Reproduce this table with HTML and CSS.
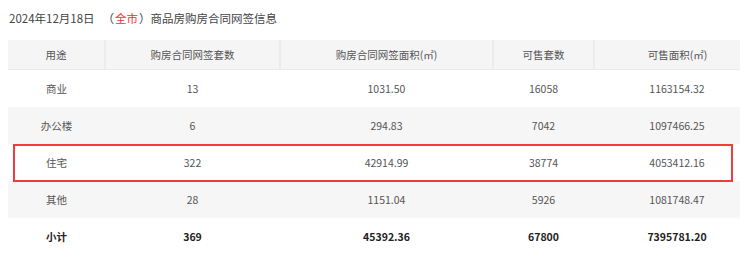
FILE: index.html
```html
<!DOCTYPE html>
<html lang="zh-CN">
<head>
<meta charset="utf-8">
<title>商品房购房合同网签信息</title>
<link rel="stylesheet" href="styles.css">
</head>
<body>
<div class="page">
  <div class="title">2024年12月18日<span class="paren">（<span class="city">全市</span>）</span>商品房购房合同网签信息</div>
  <div class="table-wrap">
    <table class="data">
      <colgroup>
        <col class="c1"><col class="c2"><col class="c3"><col class="c4"><col class="c5">
      </colgroup>
      <thead>
        <tr><th>用途</th><th>购房合同网签套数</th><th>购房合同网签面积(㎡)</th><th>可售套数</th><th>可售面积(㎡)</th></tr>
      </thead>
      <tbody>
        <tr><td>商业</td><td>13</td><td>1031.50</td><td>16058</td><td>1163154.32</td></tr>
        <tr class="alt"><td>办公楼</td><td>6</td><td>294.83</td><td>7042</td><td>1097466.25</td></tr>
        <tr><td>住宅</td><td>322</td><td>42914.99</td><td>38774</td><td>4053412.16</td></tr>
        <tr class="alt"><td>其他</td><td>28</td><td>1151.04</td><td>5926</td><td>1081748.47</td></tr>
        <tr class="total"><td>小计</td><td>369</td><td>45392.36</td><td>67800</td><td>7395781.20</td></tr>
      </tbody>
    </table>
    <div class="highlight"></div>
  </div>
</div>
</body>
</html>
```
FILE: styles.css
```css
html, body {
  margin: 0;
  padding: 0;
  background: #fff;
  overflow: hidden;
}
.page {
  padding: 8px 0 0 8px;
  font-family: "Noto Sans CJK SC", "Noto Sans", sans-serif;
  color: #555;
}
.title {
  font-size: 11.5px;
  line-height: 20px;
  height: 20px;
  color: #444;
  margin-left: 1px;
  margin-bottom: 12px;
  white-space: nowrap;
}
.paren {
  margin-left: 8px;
}
.city {
  color: #f23030;
  padding: 0 1px;
}
.table-wrap {
  position: relative;
  width: 752px;
}
.data {
  width: 752px;
  border-collapse: collapse;
  table-layout: fixed;
  font-size: 10.5px;
}
.c1 { width: 97px; }
.c2 { width: 175px; }
.c3 { width: 213px; }
.c4 { width: 101px; }
.c5 { width: 166px; }
.data th {
  height: 29px;
  padding: 0;
  background: #f5f5f5;
  font-weight: normal;
  color: #555;
  border-right: 2px solid #ececec;
  border-bottom: 1px solid #ebebeb;
  text-align: center;
}
.data th:last-child {
  border-right: none;
}
.data td {
  height: 37px;
  padding: 0;
  text-align: center;
  color: #555;
}
.data tr.alt td {
  background: #f6f6f6;
}
.data tr.total td {
  font-weight: bold;
  color: #222;
}
.highlight {
  position: absolute;
  left: 5px;
  top: 104px;
  width: 716px;
  height: 34px;
  border: 2px solid #f43a3a;
}
```
